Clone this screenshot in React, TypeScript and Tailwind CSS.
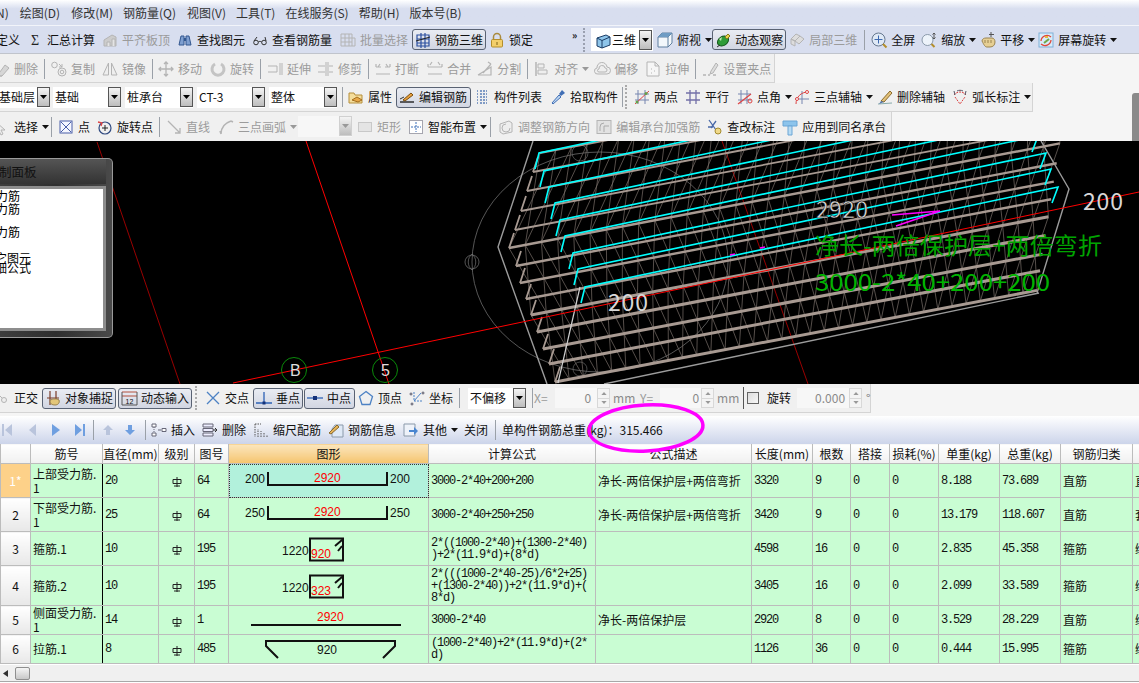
import React from "react";

const G = "#b4b4b4";
const ICONS: Record<string, React.ReactNode> = {
  flat: <><path d="M2 14V8l8-5 4 2v9z" fill="#ccc" stroke={G} /><path d="M5 14v-4h3v4M10 14V7h3v7" fill="#e4e4e4" stroke={G} /></>,
  binoc: <><path d="M2 13l2-9h3v9zM14 13l-2-9H9v9z" fill="#7f9fd0" stroke="#33578f" /><path d="M7 6h2v3H7z" fill="#33578f" /></>,
  glasses: <><circle cx="4" cy="10.500" r="2.300" fill="none" stroke="#333" /><circle cx="12" cy="10.500" r="2.300" fill="none" stroke="#333" /><path d="M6.300 10c1-.8 2-.8 3.400 0M2 9l3-4M14 9l-1-4" fill="none" stroke="#333" /></>,
  batch: <><path d="M1 2h11v12H1zM1 6h11M1 10h11M5 2v12M9 2v12" fill="none" stroke={G} /><path d="M12 6h3v8h-3" fill="none" stroke={G} /></>,
  rebar: <><path d="M2 3h12v11H2zM2 7h12M2 11h12M6 1v15M10 1v15" fill="none" stroke="#2b4f9f" strokeWidth="1.200" /><path d="M1 9l14-4" stroke="#222" /></>,
  lock: <><path d="M4.500 8V5a3.500 3.500 0 017 0v3" fill="none" stroke="#a98a3c" strokeWidth="1.500" /><rect x="2.500" y="7.500" width="11" height="7.500" rx="1" fill="#f3cf6b" stroke="#b48e2b" /><path d="M8 10v3" stroke="#7d6118" /></>,
  cube: <><path d="M2 6l9-3 4 2v8l-8 3-5-2z" fill="#8ec5ea" stroke="#1b3d66" /><path d="M2 6l5 2.500V16M7 8.500l8-3.500" fill="none" stroke="#1b3d66" /></>,
  cubeT: <><path d="M1 5l4-4h10v10l-4 4H1z" fill="#f3f7fb" stroke="#5f7f9f" /><path d="M1 5h10v10M11 5l4-4" fill="none" stroke="#5f7f9f" /><path d="M1 5l4-4h10l-4 4z" fill="#6f9cc4" /></>,
  orbit: <><ellipse cx="8" cy="9" rx="6" ry="4.500" transform="rotate(-35 8 9)" fill="#2f9c37" stroke="#14551a" /><path d="M4 7l3-2-1 4z" fill="#bfe9b0" /><path d="M10 5l3-3 2 2-3 3z" fill="#e8d24d" stroke="#8a7a18" /><path d="M2 15l3-2" stroke="#333" /></>,
  local: <><path d="M2 7l5-5 4 2-5 5zM6 9l5-5 4 3-5 5zM2 7l4 2v5l-4-2z" fill="#ddd" stroke={G} /></>,
  fit: <><circle cx="7.500" cy="7.500" r="6.500" fill="#dfe9f6" stroke="#66788f" /><path d="M7.500 3.500v8M3.500 7.500h8" stroke="#3c68b0" /><path d="M12 12l3.500 3.500" stroke="#b48e2b" strokeWidth="2" /></>,
  zoom: <><circle cx="6.500" cy="8" r="5.500" fill="#edf3fa" stroke="#8a99aa" /><path d="M10.500 12l3 3" stroke="#b48e2b" strokeWidth="2" /><path d="M13 1v6M11.500 2.500L13 1l1.500 1.500M11.500 5.500L13 7l1.500-1.500" fill="none" stroke="#555" /></>,
  pan: <><path d="M2 9c0-2 2-3 4-3h6c2 0 3 2 3 4 0 3-2 5-5 5H7c-2 0-3-2-5-6z" fill="#e6cf94" stroke="#9a8450" /><path d="M5 8v3M8 8v3M11 8v3" stroke="#9a8450" /><path d="M11 0v5M9 2.500h5" fill="none" stroke="#555" /></>,
  screen: <><rect x="1" y="1" width="14" height="14" fill="#d7ecfa" stroke="#7fb0d8" /><path d="M3 9a6 6 0 0110-4M13 8a6 6 0 01-10 4" fill="none" stroke="#e0483a" strokeWidth="1.300" /><path d="M6 11l5-4" stroke="#72a84a" strokeWidth="2" /><path d="M7 5h3" stroke="#e8b93a" strokeWidth="2" /></>,
  del: <><path d="M3 15l8-11 4 3-7 8z" fill="#d6d6d6" stroke={G} /><path d="M0 15h8" stroke={G} /></>,
  copy: <><circle cx="3.500" cy="4" r="2.800" fill="none" stroke={G} /><circle cx="11" cy="11" r="4" fill="none" stroke={G} /><circle cx="11" cy="11" r="1.800" fill="none" stroke={G} /><path d="M8 3l3 3M11 3v3H8" fill="none" stroke={G} /></>,
  mirror: <><path d="M1 14L6.500 2v12zM15 14L9.500 2v12z" fill="#eee" stroke={G} /></>,
  move: <path d="M8 1v14M1 8h14M6 3l2-2 2 2M6 13l2 2 2-2M3 6L1 8l2 2M13 6l2 2-2 2" fill="none" stroke={G} strokeWidth="1.300" />,
  rot: <path d="M5 3a6 6 0 106 0" fill="none" stroke="#c4c4c4" strokeWidth="3" />,
  ext: <path d="M1 5h9v6H1M13 2v12M15 2v12" fill="none" stroke={G} />,
  trim: <path d="M8 1v14M10 1v14M0 5h7M11 5h4M0 11h7M11 11h4" fill="none" stroke={G} />,
  brk: <path d="M1 6h5M10 6h5M1 13h14M1 6V3M15 6V3M5 3l-2 3M11 3l2 3" fill="none" stroke={G} strokeWidth="1.200" />,
  merge: <path d="M1 6h14M1 13h14M1 6V3M15 6V3M5 1l-2 3M11 1l2 3" fill="none" stroke={G} strokeWidth="1.200" />,
  split: <path d="M1 14h13V6L1 14M6 12l8-9M11 1l3 2" fill="none" stroke={G} strokeWidth="1.200" />,
  align: <><path d="M2 1v14" stroke={G} strokeWidth="1.500" /><path d="M4 3h6v4H4zM4 9h9v4H4z" fill="#eee" stroke={G} /></>,
  offset: <path d="M4 13a3 3 0 01-1-6 5 5 0 0110-1 3.500 3.500 0 010 7zM5 11a1.500 1.500 0 010-3 3 3 0 016-1 2 2 0 010 4z" fill="#eee" stroke={G} />,
  stretch: <path d="M2 1h8l4 4v10H2zM10 1v4h4M6 8h1M9 10h1M6 12h1" fill="#f6f6f6" stroke={G} />,
  grip: <><path d="M8 10l5-8 2 2-5 8-3 1z" fill="#ddd" stroke={G} /><path d="M0 14h3M5 14h2M10 14h3" stroke={G} strokeWidth="1.500" /></>,
  props: <><path d="M1 4h5l1 2h7v8H1z" fill="#f4dd9b" stroke="#b58e3a" /><path d="M4 11l5-3 5 3-4 2z" fill="#e8a848" stroke="#a36d1d" /></>,
  edit: <><path d="M1 13h14" stroke="#222" strokeWidth="1.400" /><path d="M4 11l8-7 2 2-8 6z" fill="#e9a03f" stroke="#7a4f10" /><path d="M1 10l4-2" stroke="#333" /></>,
  list: <path d="M3 2h1M3 5h1M3 8h1M3 11h1M3 14h1M6 2h7M6 5h7M6 8h7M6 11h7M6 14h7" fill="none" stroke="#5b7fb6" strokeDasharray="2 1" strokeWidth="1.300" />,
  pick: <><path d="M3 15l-1-1 7-8 2 2z" fill="#bcd6f2" stroke="#416fb5" /><path d="M9 5l3-4 3 3-4 3z" fill="#416fb5" /></>,
  two: <><path d="M4 1v14M11 1v14M1 5h14M1 11h14" stroke="#7786b0" /><path d="M1 15L15 2" stroke="#d44" /><circle cx="3" cy="13" r="1.500" fill="#66a04a" /><circle cx="12" cy="4.500" r="1.500" fill="#66a04a" /></>,
  para: <path d="M1 4h14M1 11h14M5 1v14M11 1v14" stroke="#7370a8" strokeWidth="1.300" />,
  angle: <><path d="M4 1v14M10 1v14M1 5h13M1 11h13" stroke="#7786b0" /><path d="M1 15L14 5" stroke="#d44" strokeWidth="1.200" /><circle cx="13" cy="12" r="2" fill="none" stroke="#d44" /></>,
  three: <><path d="M1 10h14M8 2v13" fill="none" stroke="#7786b0" /><path d="M2 15c0-7 5-12 12-12" fill="none" stroke="#d44" /><circle cx="3" cy="10" r="1.500" fill="#fff" stroke="#d44" /><circle cx="13" cy="3" r="1.500" fill="#fff" stroke="#d44" /></>,
  delax: <><path d="M1 15l14-1" stroke="#8aa" /><path d="M4 12l9-10 2 2-8 9z" fill="#e2c17a" stroke="#8a6a2a" /><path d="M4 12l3 1-5 2z" fill="#5577aa" /></>,
  arc: <><path d="M2 6c3-4 9-4 12 0M3 8l5 7 5-7" fill="none" stroke="#d44" strokeDasharray="2 1" /><path d="M2 2l1 4M14 2l-1 4M5 2c2-1 4-1 6 0" fill="none" stroke="#556" /></>,
  sel: <path d="M2 3l9 8H7l2 4-2 1-2-4-3 2z" fill="#eee" stroke={G} />,
  pt: <><rect x="2" y="2" width="12" height="12" fill="#f5f7ff" stroke="#4a5fa8" /><path d="M3 3l10 10M13 3L3 13" stroke="#4a5fa8" /></>,
  rotp: <><circle cx="8" cy="9" r="6" fill="none" stroke="#304a80" strokeWidth="1.200" /><path d="M8 6v6M5 9h6" stroke="#222" /><path d="M1 3l4 1-1 3" fill="none" stroke="#d44" strokeWidth="1.300" /></>,
  ln: <path d="M2 2l12 12M9 14h5V9" fill="none" stroke={G} strokeWidth="1.300" />,
  arc3: <path d="M3 15c0-7 4-11 10-13M3 15l-1-3M13 2l2 1" fill="none" stroke={G} strokeWidth="1.500" />,
  rc: <rect x="1.500" y="3.500" width="13" height="9" fill="#e4e4e4" stroke="#c8c8c8" />,
  smart: <><rect x="1.500" y="1.500" width="13" height="13" fill="#fff" stroke="#556" strokeDasharray="1 1" /><path d="M8 3v10M3 8h10" stroke="#3a6fb8" strokeDasharray="2 1" /></>,
  adj: <><path d="M2 5l9-3 3 2v9l-9 2-3-2z" fill="#eee" stroke={G} /><path d="M8 5a4 4 0 104 4" fill="none" stroke={G} /></>,
  cap: <><rect x="1" y="1.500" width="14" height="13" fill="#e2e2e2" stroke={G} /><path d="M4 12V8a4 4 0 014-4M8 13V7h5" fill="none" stroke="#aaa" /></>,
  chk: <><path d="M2 1l7 10M9 2l-5 7M1 8h5" fill="none" stroke="#4a69a8" strokeWidth="1.300" /><circle cx="11" cy="12" r="3" fill="#f0d98a" stroke="#a58b2e" /></>,
  apply: <><path d="M1 2h14v5H1z" fill="#8cc4ec" stroke="#6aa6d6" /><path d="M6 7h4v9H6z" fill="#b9dcf4" stroke="#6aa6d6" /></>,
  orth: <><path d="M1 1l8 8" stroke={G} /><circle cx="10" cy="10" r="2.500" fill="#eee" stroke={G} /><path d="M0 2h4" stroke="#d99" strokeWidth="2" /></>,
  snap: <><path d="M2 8h12M5 1v14M11 1v8" stroke="#7a3d2a" strokeWidth="1.200" /><path d="M5 11c0-2 7-3 9-1 1 3-1 5-4 5-3 0-5-1-5-4z" fill="#e3c678" stroke="#9a8450" /></>,
  inp: <><path d="M1 2h15M1 6h15" stroke="#b4513d" /><path d="M1 2v13h15V2" fill="none" stroke="#555" /><text x="8.500" y="14" fontSize="7" textAnchor="middle" fill="#111" fontFamily="Liberation Sans">12</text></>,
  cross: <path d="M2 2l12 12M14 2L2 14" stroke="#4d82c4" strokeWidth="1.300" />,
  perp: <><path d="M0 13h16M8 2v11" stroke="#2d62b5" strokeWidth="1.300" /><rect x="6.500" y="11.500" width="3" height="3" fill="#14327a" /></>,
  mid: <><path d="M0 8h16" stroke="#2d62b5" strokeWidth="1.300" /><rect x="6" y="6" width="4" height="4" fill="#14327a" /></>,
  vert: <path d="M8 1.500l6.500 5-2.500 8H4l-2.500-8z" fill="none" stroke="#4d82c4" strokeWidth="1.300" />,
  coord: <><path d="M5 2v9h9" fill="none" stroke="#4d82c4" strokeDasharray="2 1" /><path d="M5 11l7-8" stroke="#4d82c4" /><circle cx="2" cy="4" r="1" fill="none" stroke="#556" /><circle cx="14" cy="3" r="1" fill="none" stroke="#556" /><circle cx="3" cy="14" r="1" fill="none" stroke="#556" /></>,
  ins: <><path d="M1 2h4v3H1zM1 11h4v3H1zM7 8h3M11 6.500h4v3h-4z" fill="#fff" stroke="#667" /><path d="M3 5v6" stroke="#667" strokeDasharray="1 1" /></>,
  rm: <><path d="M1 2h10v3H1zM1 6.500h10v3H1zM1 11h10v3H1z" fill="#eef" stroke="#667" /><path d="M11 8h4M13 6l2 2-2 2" fill="none" stroke="#333" /></>,
  scale: <path d="M2 2v13M5 15V7M8 15V9M11 15v-4M14 15v-2M2 2h6" fill="none" stroke="#555" strokeDasharray="1.500 1" />,
  info: <><path d="M7 3h8v12H4V7z" fill="#dfe9f6" stroke="#8a99aa" /><path d="M1 11l8-8 2 2-8 7z" fill="#e6b45a" stroke="#8a6a2a" /></>,
  other: <><path d="M1 2h11v12H1z" fill="#eef2fa" stroke="#8a99aa" /><path d="M6 8h5V5l4 4-4 4v-3H6z" fill="#4a86d0" /></>,
};

function Ic({ n }: { n: string }) {
  return (
    <svg viewBox="0 0 16 16" className="w-4 h-4 shrink-0 overflow-visible">
      {n === "sigma" ? <text x="8" y="13" fontSize="14" textAnchor="middle" fill="#222" fontFamily="Liberation Serif">Σ</text> : ICONS[n]}
    </svg>
  );
}

function Caret({ dim }: { dim?: boolean }) {
  return (
    <svg viewBox="0 0 7 4" className="ml-1 w-[7px] h-1 shrink-0">
      <path d="M0 0h7L3.500 4z" fill={dim ? "#999" : "#111"} />
    </svg>
  );
}

function Item({ i, t, dim, caret, c = "" }: { i: string; t: string; dim?: boolean; caret?: boolean; c?: string }) {
  return (
    <div className={"flex items-center shrink-0 " + c}>
      <Ic n={i} />
      <span className={"ml-1 whitespace-nowrap " + (dim ? "text-[#9b9b9b]" : "text-[#111]")}>{t}</span>
      {caret && <Caret dim={dim} />}
    </div>
  );
}

function Active({ i, t, c = "" }: { i: string; t: string; c?: string }) {
  return (
    <div className={"flex items-center shrink-0 h-[21px] px-[2px] border border-[#596273] rounded-[3px] bg-gradient-to-b from-[#e9ecf3] to-[#d2d6e2] " + c}>
      <Ic n={i} />
      <span className="ml-1 whitespace-nowrap text-[#111]">{t}</span>
    </div>
  );
}

function Sep({ c = "" }: { c?: string }) {
  return <div className={"w-px h-[20px] bg-[#9aa0a8] shrink-0 " + c} />;
}

function Drop({ dim }: { dim?: boolean }) {
  return (
    <div className={"w-[13px] h-[20px] shrink-0 flex items-center justify-center border bg-gradient-to-b from-[#f4f4f4] to-[#bdbdbd] " + (dim ? "border-[#d0d0d0]" : "border-[#555]")}>
      <svg viewBox="0 0 7 4" className="w-[7px] h-1">
        <path d="M0 0h7L3.500 4z" fill={dim ? "#999" : "#000"} />
      </svg>
    </div>
  );
}

function Combo({ t, c = "" }: { t: string; c?: string }) {
  return (
    <div className={"flex items-center justify-between shrink-0 h-[21px] bg-white " + c}>
      <span className="pl-[2px] whitespace-nowrap text-[#111]">{t}</span>
      <Drop />
    </div>
  );
}

function Spin({ c = "" }: { c?: string }) {
  return (
    <div className={"flex flex-col shrink-0 w-[13px] h-[20px] border border-[#d8d8d8] bg-[#f4f4f4] " + c}>
      <div className="flex-1 flex items-center justify-center border-b border-[#d8d8d8]">
        <svg viewBox="0 0 7 4" className="w-[6px] h-[3px]"><path d="M0 4h7L3.500 0z" fill="#999" /></svg>
      </div>
      <div className="flex-1 flex items-center justify-center">
        <svg viewBox="0 0 7 4" className="w-[6px] h-[3px]"><path d="M0 0h7L3.500 4z" fill="#999" /></svg>
      </div>
    </div>
  );
}

function Nav({ d, fill, c = "" }: { d: string; fill: string; c?: string }) {
  return (
    <svg viewBox="0 0 10 14" className={"w-[10px] h-[14px] shrink-0 " + c}>
      <path d={d} fill={fill} />
    </svg>
  );
}

const MONO = "font-['Liberation_Mono','Noto_Sans_CJK_SC',monospace] tracking-[-1.2px]";
const colW = [30, 72, 56, 36, 34, 200, 167, 156, 61, 38, 39, 49, 61, 61, 72, 68];
const heads = ["", "筋号", "直径(mm)", "级别", "图号", "图形", "计算公式", "公式描述", "长度(mm)", "根数", "搭接", "损耗(%)", "单重(kg)", "总重(kg)", "钢筋归类", "搭接形式"];

type Row = { h: string; n: string; name: React.ReactNode; d: string; no: string; f: React.ReactNode; desc: string; len: string; cnt: string; u: string; tot: string; cat: string; last: string };

function Shape({ k }: { k: number }) {
  const t = { fontFamily: "Liberation Sans", fontSize: 12 };
  if (k === 1 || k === 2) {
    const s = k === 1 ? "200" : "250";
    return (
      <svg viewBox="0 0 200 33" className="w-[200px] h-[33px] block">
        <text x="16" y="19" fill="#111" {...t}>{s}</text>
        <path d="M39 8v13h119V8" fill="none" stroke="#111" strokeWidth="2" />
        <text x="85" y="18" fill="#f00" {...t}>2920</text>
        <text x="161" y="19" fill="#111" {...t}>{s}</text>
      </svg>
    );
  }
  if (k === 3 || k === 4) {
    return (
      <svg viewBox="0 0 200 33" className="w-[200px] h-[33px] block">
        <text x="53" y="23" fill="#111" {...t}>1220</text>
        <path d="M81 6.500h33v22H81zM113 8l-7 6M113 14l-4 5" fill="none" stroke="#111" strokeWidth="2" />
        <text x="82" y="26" fill="#f00" {...t}>{k === 3 ? "920" : "323"}</text>
      </svg>
    );
  }
  if (k === 5) {
    return (
      <svg viewBox="0 0 200 28" className="w-[200px] h-[28px] block">
        <path d="M22 19h150" stroke="#111" strokeWidth="2" />
        <text x="88" y="15" fill="#f00" {...t}>2920</text>
      </svg>
    );
  }
  return (
    <svg viewBox="0 0 200 28" className="w-[200px] h-[28px] block">
      <path d="M49 23L37 11V6h129v5l-12 12" fill="none" stroke="#111" strokeWidth="2" />
      <text x="88" y="19" fill="#111" {...t}>920</text>
    </svg>
  );
}

const rows: Row[] = [
  { h: "h-[34px]", n: "1*", name: <>上部受力筋.<br />1</>, d: "20", no: "64", f: "3000-2*40+200+200", desc: "净长-两倍保护层+两倍弯折", len: "3320", cnt: "9", u: "8.188", tot: "73.689", cat: "直筋", last: "直螺纹连接" },
  { h: "h-[34px]", n: "2", name: <>下部受力筋.<br />1</>, d: "25", no: "64", f: "3000-2*40+250+250", desc: "净长-两倍保护层+两倍弯折", len: "3420", cnt: "9", u: "13.179", tot: "118.607", cat: "直筋", last: "套管挤压" },
  { h: "h-[34px]", n: "3", name: "箍筋.1", d: "10", no: "195", f: <>2*((1000-2*40)+(1300-2*40)<br />)+2*(11.9*d)+(8*d)</>, desc: "", len: "4598", cnt: "16", u: "2.835", tot: "45.358", cat: "箍筋", last: "绑扎" },
  { h: "h-[40px]", n: "4", name: "箍筋.2", d: "10", no: "195", f: <>2*(((1000-2*40-25)/6*2+25)<br />+(1300-2*40))+2*(11.9*d)+(<br />8*d)</>, desc: "", len: "3405", cnt: "16", u: "2.099", tot: "33.589", cat: "箍筋", last: "绑扎" },
  { h: "h-[29px]", n: "5", name: <>侧面受力筋.<br />1</>, d: "14", no: "1", f: "3000-2*40", desc: "净长-两倍保护层", len: "2920", cnt: "8", u: "3.529", tot: "28.229", cat: "直筋", last: "绑扎" },
  { h: "h-[29px]", n: "6", name: "拉筋.1", d: "8", no: "485", f: <>(1000-2*40)+2*(11.9*d)+(2*<br />d)</>, desc: "", len: "1126", cnt: "36", u: "0.444", tot: "15.995", cat: "箍筋", last: "绑扎" },
];

const td = "border border-[#bcbcbc] p-0 overflow-hidden";
const numTd = td + " pl-[2px] " + MONO + " leading-[12px] align-middle";
const cjkTd = td + " pl-[2px] leading-[14px] align-middle";

function Canvas3D() {
  const L: [number, number][] = [[540, 153], [533, 172], [527, 191], [521, 211], [515, 230], [509, 248], [516, 266], [520, 283], [526, 299], [531, 315], [537, 332], [543, 349], [549, 364], [555, 382]];
  const R = L.map(([x, y]): [number, number] => {
    const rx = 1037 + (382 - y) * 0.17;
    return [rx, y - (rx - x) * 0.19];
  });
  const cy: [number, number][] = [[539, 153], [544, 171], [549, 187], [555, 203], [560, 220], [565, 236], [573, 253], [578, 269], [585, 287]];
  const at = (a: number, t: number): [number, number] => [L[a][0] + (R[a][0] - L[a][0]) * t, L[a][1] + (R[a][1] - L[a][1]) * t];
  const zig: string[] = [];
  const N = 17;
  const pl = (p: [number, number], q: [number, number]) => `M${p[0].toFixed(1)} ${p[1].toFixed(1)}L${q[0].toFixed(1)} ${q[1].toFixed(1)}`;
  for (let k = 0; k < N; k++) {
    const t0 = k / N;
    const dt = 1 / N;
    for (const [a, b] of [[13, 9], [9, 5], [5, 0]] as [number, number][]) {
      zig.push(pl(at(a, t0), at(b, t0 + dt / 2)), pl(at(b, t0 + dt / 2), at(a, t0 + dt)), pl(at(a, t0 + dt / 2), at(b, t0)), pl(at(b, t0 + dt), at(a, t0 + dt / 2)));
    }
  }
  const stubs = L.slice(1).map(([x, y]) => `M${x} ${y}L${x + 5} ${y - 15}`).join("");
  return (
    <svg viewBox="0 141 1139 243" className="absolute inset-0 w-[1139px] h-[243px]">
      <path d="M97 142L180 384" stroke="#900" fill="none" />
      <path d="M306 141L389 384" stroke="#f00" fill="none" />
      <path d="M722 141L808 384" stroke="#900" fill="none" />
      <ellipse cx="600" cy="262" rx="128" ry="110" fill="none" stroke="#6c6c6c" strokeWidth="0.800" />
      <path d="M472 254c-5 4-5 12 0 16 5-4 5-12 0-16zM465 262a7 7 0 0114 0 7 7 0 01-14 0z" fill="none" stroke="#777" strokeWidth="0.700" />
      <circle cx="580" cy="153" r="8" fill="none" stroke="#666" strokeWidth="0.700" />
      <circle cx="580" cy="369" r="7" fill="none" stroke="#666" strokeWidth="0.700" />
      <path d={zig.join("")} stroke="#7a706a" strokeWidth="0.700" fill="none" />
      <path d="M533 141L498 247L547 384M1041 141L1069 189L1037 293M604 384L1039 293" fill="none" stroke="#9c9c9c" strokeWidth="1.400" />
      <path d={stubs} stroke="#a89a92" strokeWidth="1.800" fill="none" />
      {L.map((p, i) => (
        <path key={i} d={pl(p, R[i])} stroke="#a89a92" strokeWidth={i > 8 ? 3 : i > 4 ? 2.400 : 1.800} fill="none" />
      ))}
      <path d="M558 383L580 287" stroke="#cfcfcf" strokeWidth="1.200" />
      {cy.map(([x, y], i) => (
        <path key={i} d={`M${x - 4} ${y + 16}L${x} ${y}L${x + 473} ${y - 100}L${x + 467} ${y - 84}`} stroke="#0ff" strokeWidth="1.600" fill="none" />
      ))}
      <path d="M233 383L1139 192" stroke="#f00" fill="none" />
      <path d="M892 215L940 211L896 226" stroke="#f0f" strokeWidth="1.600" fill="none" />
      <path d="M730 255l5-1M760 248l5-1" stroke="#f0f" strokeWidth="1.500" />
      <circle cx="294" cy="370" r="12.500" fill="none" stroke="#0a8a0a" />
      <circle cx="385" cy="370" r="12.500" fill="none" stroke="#0a8a0a" />
      <text x="290" y="376" fontSize="16" fill="#ddd" fontFamily="Liberation Sans">B</text>
      <text x="381" y="376" fontSize="16" fill="#ddd" fontFamily="Liberation Sans">5</text>
      <g fontFamily="Noto Sans CJK SC, sans-serif">
        <text x="816" y="218" fontSize="23" fill="#d8d8d8" textLength="52" stroke="#000" strokeWidth="0.400">2920</text>
        <text x="1083" y="210" fontSize="23" fill="#d8d8d8" textLength="40">200</text>
        <text x="608" y="311" fontSize="23" fill="#d8d8d8" textLength="40">200</text>
        <text x="815" y="254" fontSize="23" fill="#00a400" textLength="287" lengthAdjust="spacingAndGlyphs">净长-两倍保护层+两倍弯折</text>
        <text x="815" y="291" fontSize="24" fill="#00b400" textLength="235" lengthAdjust="spacingAndGlyphs">3000-2*40+200+200</text>
      </g>
    </svg>
  );
}

export default function App() {
  return (
    <div className="relative w-[1139px] h-[683px] overflow-hidden bg-white text-[12px] leading-[14px] text-[#111] font-['Noto_Sans_CJK_SC','Liberation_Sans',sans-serif] flex flex-col">
      {/* menu */}
      <div className="h-[26px] shrink-0 flex items-start bg-gradient-to-b from-white via-[#d8deef] via-[35%] to-[#d8deef] border-b border-[#f2f4fa] overflow-hidden">
        <div className="flex items-center h-[18px] mt-[4px] text-[#333] whitespace-nowrap">
          <span className="-ml-[8px]">(N)</span>
          <span className="ml-[11px]">绘图(D)</span>
          <span className="ml-[11px]">修改(M)</span>
          <span className="ml-[10px]">钢筋量(Q)</span>
          <span className="ml-[11px]">视图(V)</span>
          <span className="ml-[10px]">工具(T)</span>
          <span className="ml-[10px]">在线服务(S)</span>
          <span className="ml-[10px]">帮助(H)</span>
          <span className="ml-[10px]">版本号(B)</span>
        </div>
      </div>
      {/* toolbar 1 */}
      <div className="h-[28px] shrink-0 flex items-center bg-[#d8deef] border-b border-[#c0c4cc] overflow-hidden">
        <span className="-ml-[4px] shrink-0">定义</span>
        <Item i="sigma" t="汇总计算" c="ml-[7px]" />
        <Item i="flat" t="平齐板顶" dim c="ml-[7px]" />
        <Item i="binoc" t="查找图元" c="ml-[7px]" />
        <Item i="glasses" t="查看钢筋量" c="ml-[7px]" />
        <Item i="batch" t="批量选择" dim c="ml-[8px]" />
        <Active i="rebar" t="钢筋三维" c="ml-[4px] w-[74px]" />
        <Item i="lock" t="锁定" c="ml-[3px]" />
        <span className="ml-[39px] w-[8px] shrink-0 text-[10px] font-bold self-start mt-[2px]">»</span>
        <div className="ml-[3px] w-[2px] h-[24px] shrink-0 border-l-2 border-dotted border-[#9aa0b0]" />
        <div className="ml-[6px] w-[62px] h-[23px] shrink-0 flex items-center bg-white pl-[4px]">
          <Ic n="cube" />
          <span className="ml-[1px] w-[27px]">三维</span>
          <Drop />
        </div>
        <Item i="cubeT" t="俯视" caret c="ml-[4px]" />
        <Active i="orbit" t="动态观察" c="w-[74px]" />
        <Item i="local" t="局部三维" dim c="ml-[3px]" />
        <Sep c="ml-[7px]" />
        <Item i="fit" t="全屏" c="ml-[6px]" />
        <Item i="zoom" t="缩放" caret c="ml-[6px]" />
        <Item i="pan" t="平移" caret c="ml-[4px]" />
        <Item i="screen" t="屏幕旋转" caret c="ml-[3px]" />
      </div>
      {/* toolbars 2-4 */}
      <div className="relative shrink-0 flex flex-col items-start bg-[#f5f5f5]">
        <div className="h-[29px] w-[775px] flex items-center pt-[2px] bg-[#f0f0f0] border-r border-b border-[#d4d4d4] overflow-hidden">
          <Item i="del" t="删除" dim c="-ml-[6px]" />
          <Sep c="ml-[6px]" />
          <Item i="copy" t="复制" dim c="ml-[6px]" />
          <Item i="mirror" t="镜像" dim c="ml-[7px]" />
          <Sep c="ml-[6px]" />
          <Item i="move" t="移动" dim c="ml-[5px]" />
          <Item i="rot" t="旋转" dim c="ml-[8px]" />
          <Sep c="ml-[6px]" />
          <Item i="ext" t="延伸" dim c="ml-[6px]" />
          <Item i="trim" t="修剪" dim c="ml-[7px]" />
          <Sep c="ml-[6px]" />
          <Item i="brk" t="打断" dim c="ml-[6px]" />
          <Item i="merge" t="合并" dim c="ml-[8px]" />
          <Item i="split" t="分割" dim c="ml-[6px]" />
          <Sep c="ml-[6px]" />
          <Item i="align" t="对齐" dim caret c="ml-[6px]" />
          <Item i="offset" t="偏移" dim c="ml-[5px]" />
          <Item i="stretch" t="拉伸" dim c="ml-[7px]" />
          <Sep c="ml-[6px]" />
          <Item i="grip" t="设置夹点" dim c="ml-[7px]" />
        </div>
        <div className="h-[29px] w-[1033px] flex items-center bg-[#f0f0f0] border-r border-b border-[#d4d4d4] overflow-hidden">
          <Combo t="基础层" c="-ml-[3px] w-[53px]" />
          <Combo t="基础" c="ml-[3px] w-[68px]" />
          <Combo t="桩承台" c="ml-[4px] w-[68px]" />
          <Combo t="CT-3" c="ml-[4px] w-[68px]" />
          <Combo t="整体" c="ml-[4px] w-[68px]" />
          <Sep c="ml-[5px]" />
          <Item i="props" t="属性" c="ml-[5px]" />
          <Active i="edit" t="编辑钢筋" c="ml-[4px] w-[75px]" />
          <Item i="list" t="构件列表" c="ml-[3px]" />
          <Item i="pick" t="拾取构件" c="ml-[8px]" />
          <Sep c="ml-[4px]" />
          <div className="ml-[2px] w-[2px] h-[24px] shrink-0 border-l-2 border-dotted border-[#aaa]" />
          <Item i="two" t="两点" c="ml-[7px]" />
          <Item i="para" t="平行" c="ml-[7px]" />
          <Item i="angle" t="点角" caret c="ml-[8px]" />
          <Item i="three" t="三点辅轴" caret c="ml-[2px]" />
          <Item i="delax" t="删除辅轴" c="ml-[4px]" />
          <Item i="arc" t="弧长标注" caret c="ml-[7px]" />
        </div>
        <div className="h-[29px] w-[892px] flex items-center bg-[#f0f0f0] border-r border-[#d4d4d4] overflow-hidden">
          <Item i="sel" t="选择" caret c="-ml-[6px]" />
          <Sep c="ml-[2px]" />
          <Item i="pt" t="点" c="ml-[6px]" />
          <Item i="rotp" t="旋转点" c="ml-[7px]" />
          <Sep c="ml-[6px]" />
          <Item i="ln" t="直线" dim c="ml-[6px]" />
          <Item i="arc3" t="三点画弧" dim caret c="ml-[8px]" />
          <div className="ml-[1px] w-[54px] h-[21px] shrink-0 flex justify-end bg-[#f7f7f7]"><Drop dim /></div>
          <Item i="rc" t="矩形" dim c="ml-[5px]" />
          <Item i="smart" t="智能布置" caret c="ml-[7px]" />
          <Sep c="ml-[3px]" />
          <Item i="adj" t="调整钢筋方向" dim c="ml-[7px]" />
          <Item i="cap" t="编辑承台加强筋" dim c="ml-[6px]" />
          <Item i="chk" t="查改标注" c="ml-[7px]" />
          <Item i="apply" t="应用到同名承台" c="ml-[7px]" />
        </div>
        <div className="absolute right-0 top-[39px] w-[7px] h-[48px] bg-[#8a8a8a] rounded-tl-[3px]" />
      </div>
      {/* canvas */}
      <div className="relative h-[243px] shrink-0 bg-black overflow-hidden">
        <Canvas3D />
        <div className="absolute left-0 top-[17px] w-[113px] h-[180px] flex flex-col bg-gradient-to-r from-[#3d3d3d] via-[#2f2f2f] to-[#4a4a4a] border border-l-0 border-[#9a9a9a] rounded-r-[5px] pr-[6px] pb-[6px]">
          <div className="h-[25px] shrink-0 flex items-center -ml-[1px] text-[12.500px] text-[#111] bg-gradient-to-b from-[#555] to-[#333]">制面板</div>
          <div className="mt-[2px] flex-1 bg-white border-[3px] border-l-0 border-[#8d8d8d] text-black text-[12px] leading-[13px] flex flex-col overflow-hidden">
            <span className="-ml-[4px]">力筋</span>
            <span className="-ml-[4px]">力筋</span>
            <span className="mt-[10px] -ml-[4px]">力筋</span>
            <span className="mt-[13px] -ml-[5px]">它图元</span>
            <span className="-mt-[3px] -ml-[5px]">细公式</span>
          </div>
        </div>
      </div>
      {/* snap bar */}
      <div className="h-[32px] shrink-0 bg-[#f5f5f5] overflow-hidden">
        <div className="h-[29px] w-[871px] flex items-center bg-[#f0f0f0] border-r border-b border-[#d4d4d4]">
          <Item i="orth" t="正交" c="-ml-[6px]" />
          <Active i="snap" t="对象捕捉" c="ml-[4px] w-[74px]" />
          <Active i="inp" t="动态输入" c="ml-[2px] w-[74px]" />
          <div className="ml-[3px] w-[2px] h-[24px] shrink-0 border-l-2 border-dotted border-[#aaa]" />
          <Item i="cross" t="交点" c="ml-[8px]" />
          <Active i="perp" t="垂点" c="ml-[4px] w-[50px]" />
          <Active i="mid" t="中点" c="ml-[1px] w-[51px]" />
          <Item i="vert" t="顶点" c="ml-[3px]" />
          <Item i="coord" t="坐标" c="ml-[7px]" />
          <Sep c="ml-[6px]" />
          <Combo t="不偏移" c="ml-[8px] w-[58px]" />
          <Sep c="ml-[6px]" />
          <span className="ml-[1px] w-[15px] shrink-0 text-[#9b9b9b]">X=</span>
          <div className="ml-[6px] w-[42px] h-[20px] shrink-0 bg-[#f7f7f7] text-right pr-[6px] leading-[20px] text-[#8a8a8a]">0</div>
          <Spin />
          <span className="ml-[3px] w-[22px] shrink-0 text-[#8a8a8a]">mm</span>
          <span className="ml-[5px] w-[15px] shrink-0 text-[#9b9b9b]">Y=</span>
          <div className="ml-[5px] w-[41px] h-[20px] shrink-0 bg-[#f7f7f7] text-right pr-[2px] leading-[20px] text-[#8a8a8a]">0</div>
          <Spin />
          <span className="ml-[3px] w-[22px] shrink-0 text-[#8a8a8a]">mm</span>
          <div className="ml-[4px] w-px h-[22px] bg-[#555] shrink-0" />
          <div className="ml-[3px] w-[12px] h-[12px] shrink-0 border border-[#666] bg-gradient-to-br from-[#ddd] to-[#f7f7f7]" />
          <span className="ml-[8px] w-[24px] shrink-0">旋转</span>
          <div className="ml-[6px] w-[52px] h-[20px] shrink-0 bg-[#f7f7f7] text-right pr-[4px] leading-[20px] text-[#8a8a8a]">0.000</div>
          <Spin />
          <span className="ml-[4px] text-[#777]">°</span>
        </div>
      </div>
      {/* grid toolbar */}
      <div className="h-[28px] shrink-0 flex items-center bg-gradient-to-b from-white to-[#ccd4ea] overflow-hidden">
        <Nav d="M0 1h2v12H0zM10 1v12L3 7z" fill="#b9c4dc" c="ml-[2px]" />
        <Nav d="M8 1v12L1 7z" fill="#b9c4dc" c="ml-[16px]" />
        <Nav d="M1 1v12l8-6z" fill="#6f9fe0" c="ml-[13px]" />
        <Nav d="M0 1v12l7-6zM8 1h2v12H8z" fill="#6f9fe0" c="ml-[14px]" />
        <Sep c="ml-[8px]" />
        <Nav d="M5 2l5 5H7v5H3V7H0z" fill="#b9c4dc" c="ml-[9px]" />
        <Nav d="M5 12l5-5H7V2H3v5H0z" fill="#6f9fe0" c="ml-[12px]" />
        <Sep c="ml-[10px]" />
        <Item i="ins" t="插入" c="ml-[5px]" />
        <Item i="rm" t="删除" c="ml-[7px]" />
        <Item i="scale" t="缩尺配筋" c="ml-[7px]" />
        <Item i="info" t="钢筋信息" c="ml-[7px]" />
        <Item i="other" t="其他" caret c="ml-[7px]" />
        <span className="ml-[6px] shrink-0">关闭</span>
        <Sep c="ml-[7px]" />
        <span className="ml-[6px] whitespace-nowrap">单构件钢筋总重(kg)：315.466</span>
      </div>
      {/* table */}
      <div className="h-[221px] shrink-0 overflow-hidden bg-white">
        <table className="table-fixed border-collapse w-[1200px] -mt-px">
          <colgroup>
            {colW.map((w, i) => <col key={i} style={{ width: w }} />)}
          </colgroup>
          <thead>
            <tr className="h-[20px]">
              {heads.map((h, i) => (
                <th key={i} className={"border border-[#bcbcbc] p-0 font-normal text-center whitespace-nowrap overflow-hidden " + (i === 5 ? "bg-gradient-to-b from-[#fbe6bd] to-[#f5c46c]" : "bg-gradient-to-b from-white to-[#f0f0f0]")}>{h}</th>
              ))}
            </tr>
          </thead>
          <tbody>
            {rows.map((r, i) => (
              <tr key={i} className={r.h + " bg-[#c9fdd3]"}>
                <td className={td + " text-center align-middle " + (i === 0 ? "bg-[#fdd189] text-white" : "bg-gradient-to-b from-white to-[#e8e8e8]")}>{r.n}</td>
                <td className={cjkTd + " border-r-black"}>{r.name}</td>
                <td className={numTd}>{r.d}</td>
                <td className={td + " text-center align-middle"}>
                  <svg viewBox="0 0 10 10" className="w-[10px] h-[10px] inline-block"><path d="M5 0v10M1 2.500h8v4H1zM2 9h6" fill="none" stroke="#222" /></svg>
                </td>
                <td className={numTd}>{r.no}</td>
                <td className={td + " align-middle " + (i === 0 ? "bg-[#b2f1dc] outline-1 outline-dotted outline-[#333] -outline-offset-1" : "")}><Shape k={i + 1} /></td>
                <td className={numTd + " whitespace-nowrap"}>{r.f}</td>
                <td className={td + " pl-[2px] whitespace-nowrap align-middle"}>{r.desc}</td>
                <td className={numTd}>{r.len}</td>
                <td className={numTd}>{r.cnt}</td>
                <td className={numTd}>0</td>
                <td className={numTd}>0</td>
                <td className={numTd}>{r.u}</td>
                <td className={numTd}>{r.tot}</td>
                <td className={td + " pl-[2px] align-middle"}>{r.cat}</td>
                <td className={td + " pl-[2px] whitespace-nowrap align-middle"}>{r.last}</td>
              </tr>
            ))}
          </tbody>
        </table>
      </div>
      {/* scrollbar */}
      <div className="h-[17px] shrink-0 flex items-center bg-[#f0f0f0] border-b border-[#a8a8a8]">
        <svg viewBox="0 0 5 7" className="ml-[3px] w-[5px] h-[7px] shrink-0"><path d="M5 0v7L0 3.500z" fill="#333" /></svg>
        <div className="ml-[7px] w-[15px] h-[13px] shrink-0 border border-[#8f8f8f] rounded-[2px] bg-gradient-to-b from-[#f5f5f5] to-[#c8c8c8]" />
      </div>
      {/* hand-drawn highlight around the total weight */}
      <svg viewBox="0 0 1139 683" className="absolute inset-0 w-[1139px] h-[683px] pointer-events-none">
        <ellipse cx="646" cy="428" rx="57" ry="23" transform="rotate(-3 646 428)" fill="none" stroke="#f0f" strokeWidth="3.500" />
      </svg>
    </div>
  );
}
